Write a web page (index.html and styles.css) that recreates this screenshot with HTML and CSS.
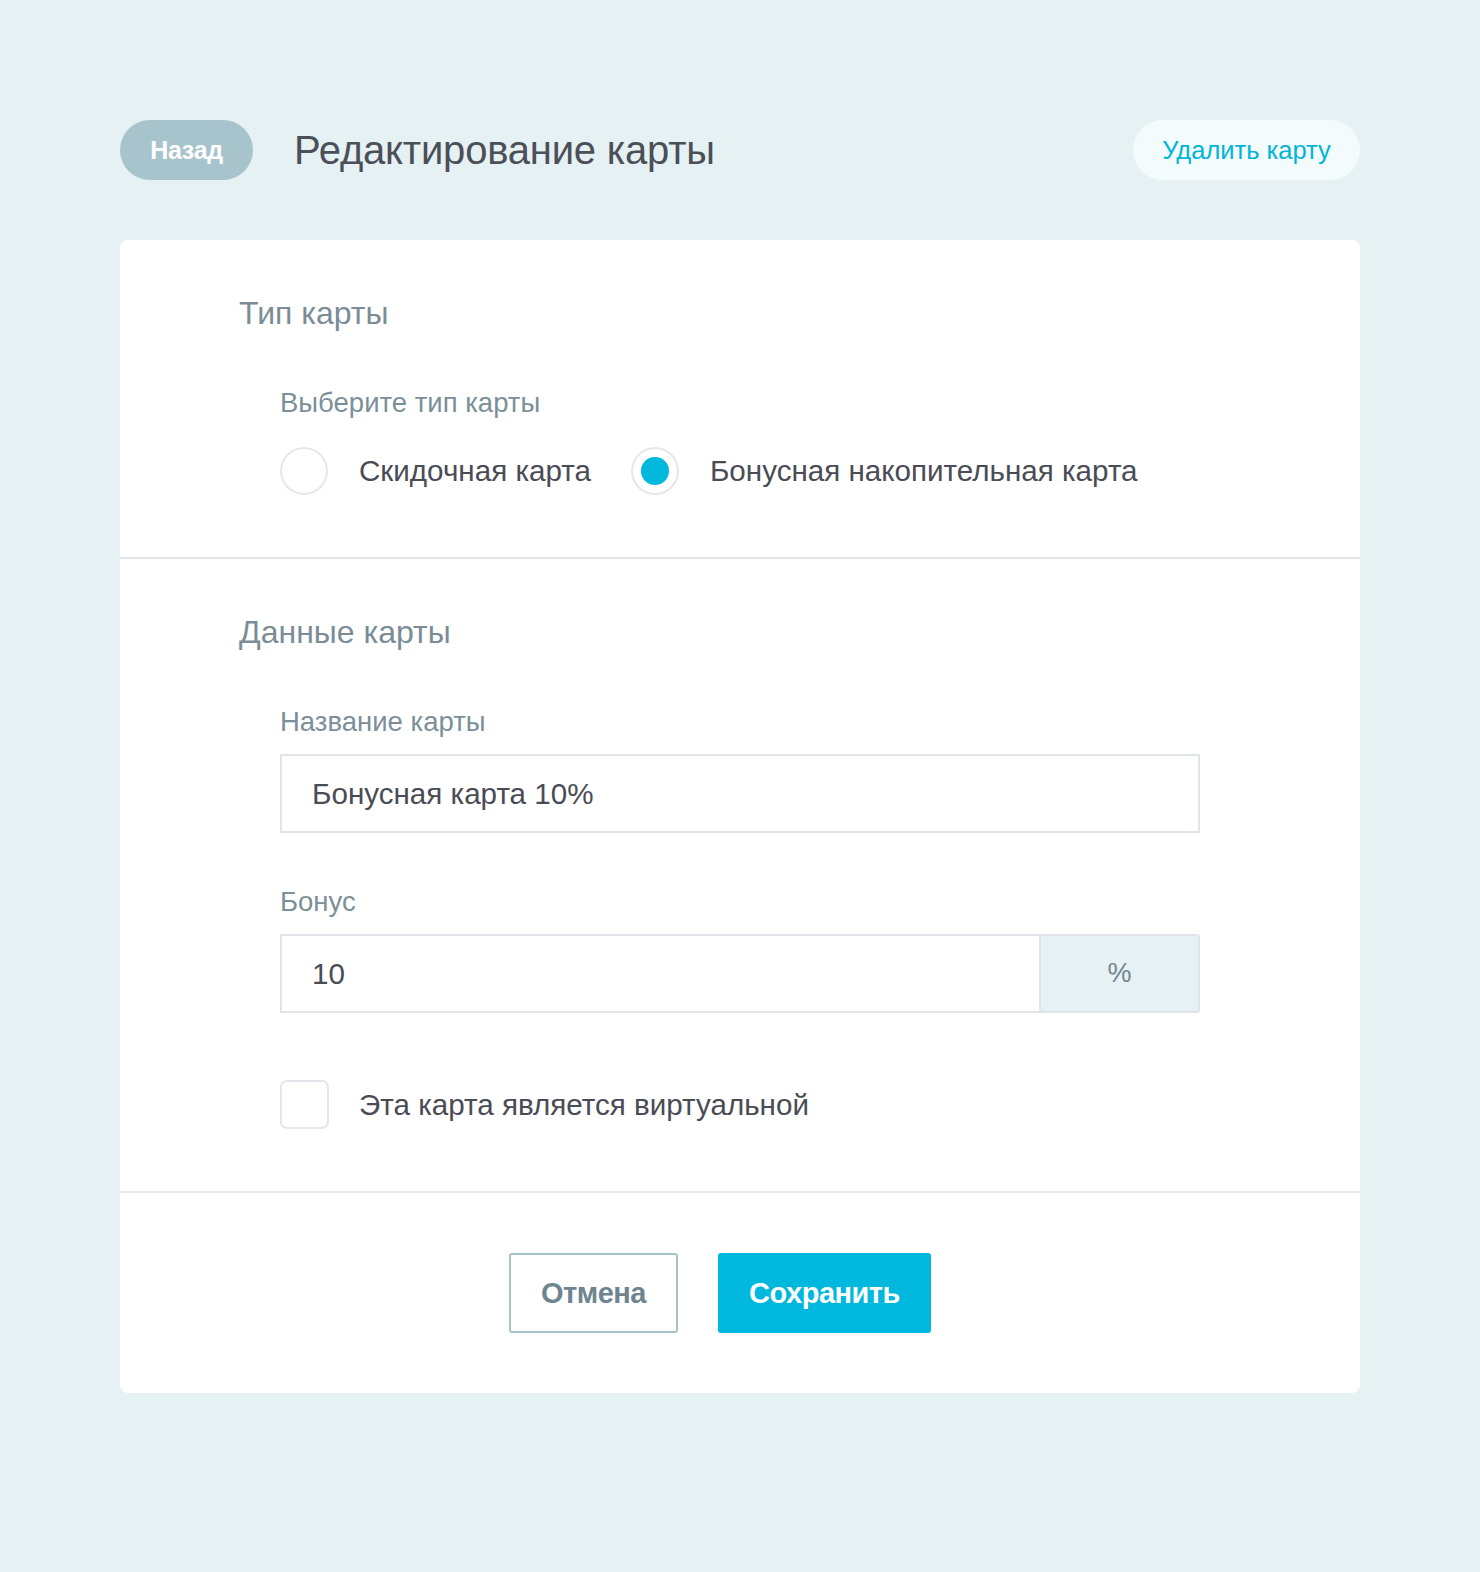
FILE: index.html
```html
<!DOCTYPE html>
<html lang="ru">
<head>
    <meta charset="UTF-8">
    <meta name="viewport" content="width=device-width, initial-scale=1.0">
    <title>Редактирование карты</title>
    <link rel="stylesheet" href="styles.css">
</head>
<body>
    <div class="page">
        <div class="header">
            <button class="back-btn">Назад</button>
            <h1>Редактирование карты</h1>
            <button class="delete-btn">Удалить карту</button>
        </div>

        <div class="card">
            <div class="section">
                <h2>Тип карты</h2>
                <div class="field field-last">
                    <div class="label">Выберите тип карты</div>
                    <div class="radio-row">
                        <label class="radio">
                            <span class="radio-circle"></span>
                            <span class="radio-text">Скидочная карта</span>
                        </label>
                        <label class="radio checked">
                            <span class="radio-circle"></span>
                            <span class="radio-text">Бонусная накопительная карта</span>
                        </label>
                    </div>
                </div>
            </div>

            <div class="section">
                <h2>Данные карты</h2>
                <div class="field">
                    <div class="label">Название карты</div>
                    <div class="input">Бонусная карта 10%</div>
                </div>
                <div class="field field-before-check">
                    <div class="label">Бонус</div>
                    <div class="input-group">
                        <div class="input">10</div>
                        <div class="addon">%</div>
                    </div>
                </div>
                <label class="checkbox">
                    <span class="checkbox-box"></span>
                    <span class="checkbox-text">Эта карта является виртуальной</span>
                </label>
            </div>

            <div class="footer">
                <button class="cancel-btn">Отмена</button>
                <button class="save-btn">Сохранить</button>
            </div>
        </div>
    </div>
</body>
</html>
```

FILE: styles.css
```css
* {
    margin: 0;
    padding: 0;
    box-sizing: border-box;
    font-family: "Liberation Sans", Arial, sans-serif;
}

body {
    background-color: #e6f1f3;
    color: #4a4d56;
}

.page {
    width: 1240px;
    margin: 0 auto;
    padding-top: 120px;
    padding-bottom: 180px;
}

.header {
    display: flex;
    align-items: center;
    height: 60px;
    margin-bottom: 60px;
}

button {
    border: none;
    cursor: pointer;
    background: none;
}

.back-btn {
    height: 60px;
    width: 133px;
    border-radius: 30px;
    background-color: #a7c4cc;
    color: white;
    font-size: 25px;
    font-weight: bold;
    letter-spacing: -0.3px;
}

h1 {
    flex: 1;
    margin-left: 41px;
    font-size: 40px;
    font-weight: normal;
    color: #4b4f57;
    letter-spacing: -0.2px;
}

.delete-btn {
    height: 60px;
    width: 227px;
    border-radius: 30px;
    background-color: #f4fbfd;
    color: #00b5d9;
    font-size: 25.5px;
}

.card {
    background-color: white;
    border-radius: 8px;
}

.section {
    padding: 55px 160px 62px 119px;
    border-bottom: 2px solid #e2e6ec;
}

h2 {
    font-size: 32px;
    line-height: 36px;
    font-weight: normal;
    color: #7a8d97;
    margin-bottom: 54px;
}

.field {
    padding-left: 41px;
    margin-bottom: 51px;
}

.field-last {
    margin-bottom: 0;
}

.field-before-check {
    margin-bottom: 67px;
}

.label {
    font-size: 27.5px;
    line-height: 36px;
    color: #7b8f99;
    margin-bottom: 14px;
}

.radio-row {
    display: flex;
    align-items: center;
    gap: 40px;
    margin-top: 26px;
}

.radio, .checkbox {
    display: flex;
    align-items: center;
}

.radio-circle {
    width: 48px;
    height: 48px;
    border-radius: 50%;
    border: 2px solid #e4e8ee;
    display: flex;
    align-items: center;
    justify-content: center;
    margin-right: 31px;
}

.radio.checked .radio-circle::after {
    content: "";
    width: 28px;
    height: 28px;
    border-radius: 50%;
    background-color: #00b8dc;
}

.radio-text, .checkbox-text {
    font-size: 29.6px;
    color: #4a4c55;
}

.input {
    height: 79px;
    border: 2px solid #dfe5ea;
    padding-left: 30px;
    display: flex;
    align-items: center;
    font-size: 29.6px;
    color: #4a4c55;
}

.input-group {
    display: flex;
}

.input-group .input {
    flex: 1;
    border-right: none;
}

.addon {
    width: 161px;
    height: 79px;
    border: 2px solid #dfe5ea;
    border-radius: 0 3px 3px 0;
    background-color: #e6f1f4;
    display: flex;
    align-items: center;
    justify-content: center;
    font-size: 27px;
    color: #6f858f;
}

.checkbox {
    padding-left: 41px;
}

.checkbox-box {
    width: 49px;
    height: 49px;
    border: 2px solid #e2e7ed;
    border-radius: 7px;
    margin-right: 30px;
}

.footer {
    display: flex;
    justify-content: center;
    gap: 40px;
    padding: 60px 40px 60px 0;
}

.cancel-btn, .save-btn {
    height: 80px;
    border-radius: 3px;
    font-size: 29px;
    font-weight: bold;
    letter-spacing: -0.5px;
}

.cancel-btn {
    width: 169px;
    border: 2px solid #a9c1c9;
    color: #6e8591;
}

.save-btn {
    width: 213px;
    background-color: #00b8dd;
    color: white;
}
```
